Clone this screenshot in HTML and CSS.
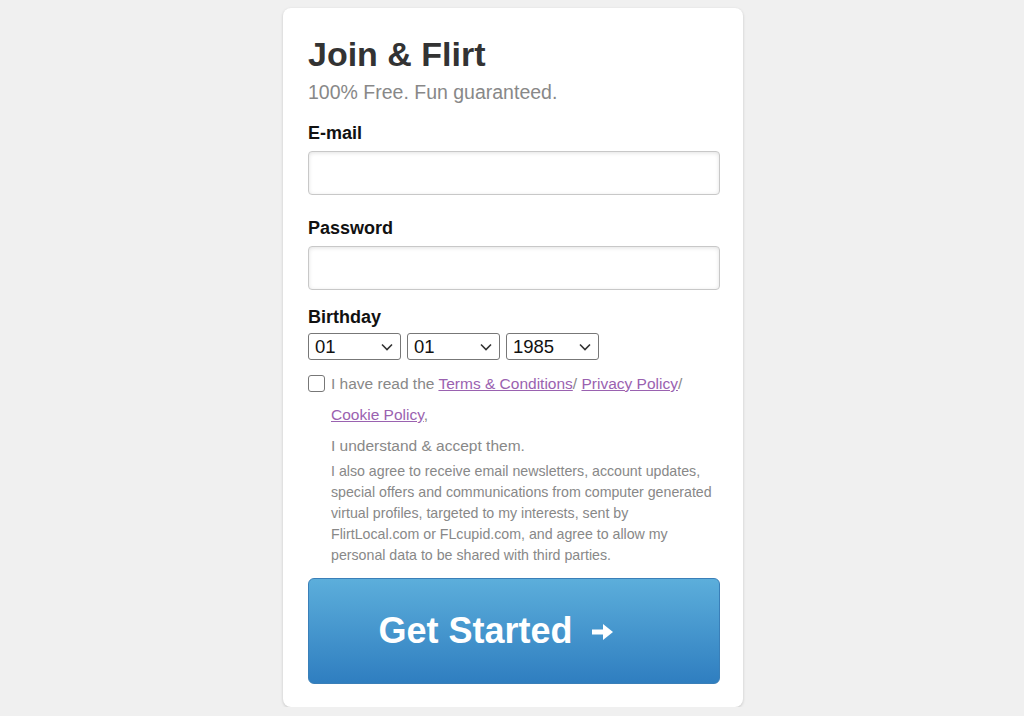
FILE: index.html
```html
<!DOCTYPE html>
<html lang="en">
<head>
  <meta charset="UTF-8" />
  <meta name="viewport" content="width=device-width, initial-scale=1.0" />
  <title>Join &amp; Flirt</title>
  <link rel="stylesheet" href="styles.css">
</head>
<body>

  <div class="card">
    <h1 class="title">Join &amp; Flirt</h1>
    <p class="subtitle">100% Free. Fun guaranteed.</p>

    <form id="joinForm">
      <label class="field-label" for="email">E-mail</label>
      <input class="text-input" type="email" id="email" name="email" />

      <label class="field-label label-password" for="password">Password</label>
      <input class="text-input" type="password" id="password" name="password" />

      <label class="field-label label-birthday" for="day">Birthday</label>
      <div class="birthday">
        <select class="date-select" id="day" name="day">
          <option>01</option>
        </select>
        <select class="date-select" id="month" name="month">
          <option>01</option>
        </select>
        <select class="date-select" id="year" name="year">
          <option>1985</option>
        </select>
      </div>

      <div class="terms">
        <input class="check" type="checkbox" id="agree" name="agree" />
        <div class="terms-text">
          <p class="terms-main">I have read the <a href="#">Terms &amp; Conditions</a>/ <a href="#">Privacy Policy</a>/ <a href="#">Cookie Policy</a>,</p>
          <p class="terms-main">I understand &amp; accept them.</p>
          <p class="terms-small">I also agree to receive email newsletters, account updates, special offers and communications from computer generated virtual profiles, targeted to my interests, sent by FlirtLocal.com or FLcupid.com, and agree to allow my personal data to be shared with third parties.</p>
        </div>
      </div>

      <button class="start" type="submit">
        Get Started
        <svg class="arrow" width="23" height="20" viewBox="0 0 23 20">
          <path d="M1 7.5h11V2l10 8-10 8v-5.5H1z" fill="#fff"/>
        </svg>
      </button>
    </form>
  </div>

</body>
</html>
```

FILE: styles.css
```css
body {
  margin: 0;
  background-color: #f0f0f0;
  font-family: "Liberation Sans", Arial, sans-serif;
}
.card {
  width: 460px;
  box-sizing: border-box;
  margin: 8px auto 0;
  padding: 26px 23px 23px 25px;
  background: #fff;
  border-radius: 8px;
  box-shadow: 0 1px 3px rgba(0, 0, 0, 0.18);
  transform: translateX(1px);
}
.title {
  margin: 0;
  font-size: 34px;
  line-height: 40px;
  color: #333;
}
.subtitle {
  margin: 7px 0 0;
  font-size: 19.5px;
  line-height: 23px;
  color: #888;
}
.field-label {
  display: block;
  margin-top: 19px;
  font-size: 18px;
  line-height: 21px;
  font-weight: bold;
  color: #111;
}
.label-password {
  margin-top: 23px;
}
.label-birthday {
  margin-top: 17px;
}
.text-input {
  display: block;
  box-sizing: border-box;
  width: 100%;
  height: 44px;
  margin: 7px 0 0;
  border: 1px solid #c8c8c8;
  border-radius: 4px;
  box-shadow: inset 0 1px 4px rgba(0, 0, 0, 0.12);
  font-size: 17px;
}
.birthday {
  display: flex;
  gap: 6px;
  margin-top: 5px;
}
.date-select {
  appearance: none;
  -webkit-appearance: none;
  width: 93px;
  height: 27px;
  padding: 0 0 0 6px;
  border: 1px solid #777;
  border-radius: 3px;
  background: #fff url("data:image/svg+xml,%3Csvg xmlns='http://www.w3.org/2000/svg' width='12' height='8' viewBox='0 0 12 8'%3E%3Cpath d='M1 1.5l5 5 5-5' fill='none' stroke='%23333' stroke-width='1.6'/%3E%3C/svg%3E") no-repeat right 7px center;
  font-family: "Liberation Sans", Arial, sans-serif;
  font-size: 18.5px;
  color: #111;
}
.terms {
  display: flex;
  gap: 6px;
  margin-top: 8px;
}
.check {
  appearance: none;
  -webkit-appearance: none;
  flex: none;
  width: 17px;
  height: 17px;
  margin: 7px 0 0;
  border: 1px solid #777;
  border-radius: 3px;
  background: #fff;
}
.terms-text {
  flex: 1;
  padding-right: 6px;
}
.terms-main {
  margin: 0;
  font-size: 15.5px;
  line-height: 31px;
  color: #888;
}
.terms-main a {
  color: #9a62b0;
}
.terms-small {
  margin: 0;
  font-size: 14.2px;
  line-height: 21px;
  color: #888;
}
.start {
  display: block;
  width: 100%;
  height: 106px;
  margin-top: 12px;
  padding: 0 36px 0 0;
  border: 1px solid #3a7fb8;
  border-radius: 6px;
  background: linear-gradient(#5caedb, #2f7ec0);
  color: #fff;
  font-family: "Liberation Sans", Arial, sans-serif;
  font-size: 36px;
  font-weight: bold;
  cursor: pointer;
}
.arrow {
  margin-left: 8px;
  vertical-align: 1px;
}
```
